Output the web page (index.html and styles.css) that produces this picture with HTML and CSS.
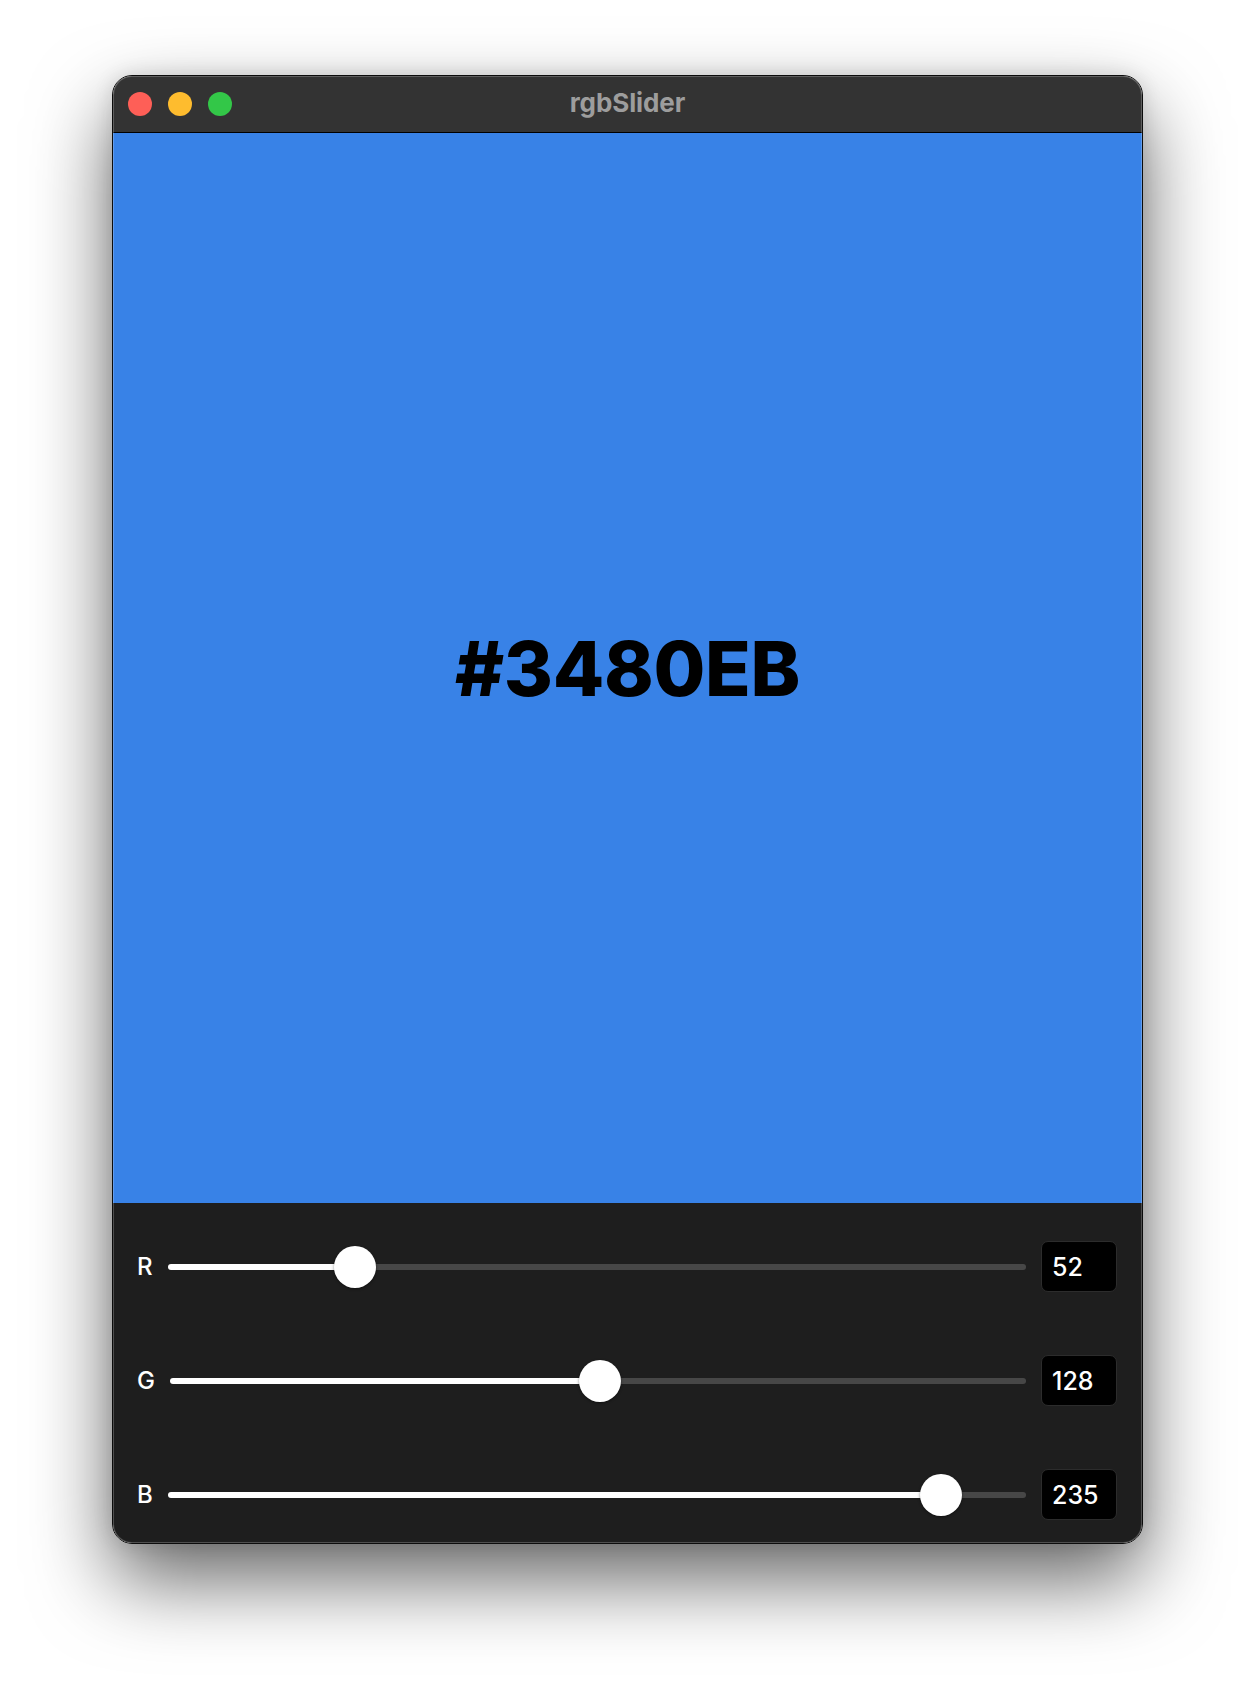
FILE: index.html
```html
<!DOCTYPE html>
<html lang="en">
<head>
<meta charset="utf-8">
<title>rgbSlider</title>
<link rel="stylesheet" href="styles.css">
</head>
<body>
<div class="window">
  <div class="titlebar">
    <div class="lights">
      <span class="light red"></span>
      <span class="light yellow"></span>
      <span class="light green"></span>
    </div>
    <div class="title">rgbSlider</div>
  </div>
  <div class="swatch">
    <div class="hex">#3480EB</div>
  </div>
  <div class="panel">
    <div class="row">
      <span class="label">R</span>
      <input class="slider" type="range" min="0" max="255" value="52" style="--v:0.20392">
      <div class="value">52</div>
    </div>
    <div class="row">
      <span class="label">G</span>
      <input class="slider" type="range" min="0" max="255" value="128" style="--v:0.50196">
      <div class="value">128</div>
    </div>
    <div class="row">
      <span class="label">B</span>
      <input class="slider" type="range" min="0" max="255" value="235" style="--v:0.92157">
      <div class="value">235</div>
    </div>
  </div>
</div>
</body>
</html>
```
FILE: styles.css
```css
html, body {
  margin: 0;
  padding: 0;
  background: #ffffff;
}

html {
  min-height: 1692px;
}

body {
  box-sizing: border-box;
  min-height: 1692px;
  padding: 75px 0 0 112px;
  font-family: Inter, "Liberation Sans", sans-serif;
}

.window {
  position: relative;
  width: 1029px;
  height: 1467px;
  border: 1px solid #0c0c0c;
  border-radius: 20px;
  overflow: hidden;
  display: flex;
  flex-direction: column;
  box-shadow: 0 36px 80px rgba(0, 0, 0, 0.6), 0 0 20px rgba(0, 0, 0, 0.12);
}

.window::after {
  content: "";
  position: absolute;
  inset: 0;
  border-radius: 19px;
  box-shadow: inset 0 0 0 1px rgba(255, 255, 255, 0.22);
  pointer-events: none;
}

.titlebar {
  position: relative;
  height: 56px;
  flex: none;
  background: #333333;
  border-bottom: 1px solid #000000;
  display: flex;
  align-items: center;
  justify-content: center;
}

.lights {
  position: absolute;
  left: 15px;
  top: 16px;
  display: flex;
  gap: 16px;
}

.light {
  width: 24px;
  height: 24px;
  border-radius: 50%;
}

.red { background: #fe5f57; }
.yellow { background: #febc2e; }
.green { background: #33c748; }

.title {
  color: #9d9d9d;
  font-size: 26px;
  font-weight: 700;
  letter-spacing: -0.1px;
  margin-bottom: 4px;
}

.swatch {
  height: 1070px;
  flex: none;
  background: #3882e7;
  display: flex;
  align-items: center;
  justify-content: center;
}

.hex {
  color: #000000;
  font-size: 75px;
  font-weight: 800;
  letter-spacing: -0.3px;
  line-height: 1;
}

.panel {
  flex: 1;
  background: #1e1e1e;
  padding: 38px 25px 23px 24px;
  display: flex;
  flex-direction: column;
  gap: 63px;
}

.row {
  height: 51px;
  display: flex;
  align-items: center;
}

.label {
  color: #ffffff;
  font-size: 24px;
  font-weight: 500;
  margin-right: 15px;
}

.slider {
  flex: 1;
  margin: 0;
  height: 42px;
  background: transparent;
  -webkit-appearance: none;
  appearance: none;
}

.slider::-webkit-slider-runnable-track {
  height: 6px;
  border-radius: 3px;
  background: linear-gradient(to right,
    #ffffff 0,
    #ffffff calc(21px + (100% - 42px) * var(--v)),
    #474747 calc(21px + (100% - 42px) * var(--v)),
    #474747 100%);
}

.slider::-webkit-slider-thumb {
  -webkit-appearance: none;
  appearance: none;
  width: 42px;
  height: 42px;
  margin-top: -18px;
  border-radius: 50%;
  background: #ffffff;
  box-shadow: 0 1px 3px rgba(0, 0, 0, 0.45);
}

.value {
  width: 64px;
  height: 49px;
  margin-left: 15px;
  padding-left: 10px;
  background: #000000;
  border: 1px solid #2c2c2c;
  border-radius: 7px;
  color: #ffffff;
  font-size: 25px;
  font-weight: 500;
  display: flex;
  align-items: center;
}
```
